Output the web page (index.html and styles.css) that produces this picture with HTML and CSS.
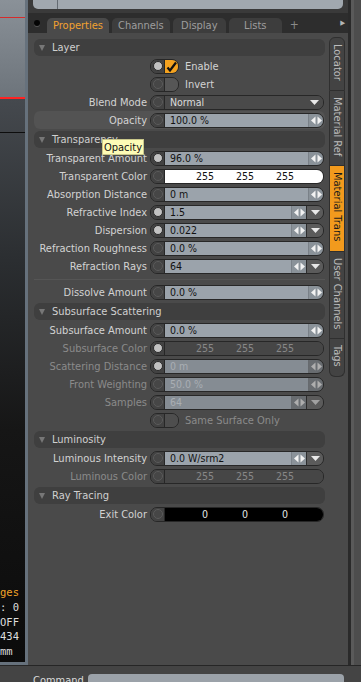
FILE: index.html
```html
<!DOCTYPE html>
<html lang="en">
<head>
    <meta charset="UTF-8">
    <meta name="viewport" content="width=device-width, initial-scale=1.0">
    <title>Properties - Material Trans</title>
    <link rel="stylesheet" href="styles.css">
</head>
<body>
    <svg class="defs" width="0" height="0">
        <symbol id="spin" viewBox="0 0 13 13">
            <path d="M1 6.5 5.5 2.5v8z" fill="#f2f2f2"/>
            <path d="M12 6.5 7.5 2.5v8z" fill="#f2f2f2"/>
        </symbol>
        <symbol id="down" viewBox="0 0 9 5">
            <path d="M0 0h9L4.5 5z" fill="#e8e8e8"/>
        </symbol>
        <symbol id="tick" viewBox="0 0 13 13">
            <path d="M2.5 7.5 5 10.5 11 2.5" fill="none" stroke="#111" stroke-width="2.2"/>
        </symbol>
    </svg>

    <div class="app">
        <div class="main">
            <div class="viewport">
                <div class="hud">
                    <div class="hl">ges</div>
                    <div>: 0</div>
                    <div>OFF</div>
                    <div>434</div>
                    <div>mm</div>
                </div>
            </div>

            <div class="side">
                <div class="topstrip">
                    <div class="ts-box"><div class="ts-cell"></div></div>
                </div>
                <div class="tabbar">
                    <span class="dot"></span>
                    <div class="tab active">Properties</div>
                    <div class="tab">Channels</div>
                    <div class="tab">Display</div>
                    <div class="tab">Lists</div>
                    <span class="tab-add">+</span>
                    <span class="tab-more">&#9654;</span>
                </div>

                <div class="body">
                    <div class="props">
                        <div class="hdr"><span class="tri"></span>Layer</div>
                        <div class="row">
                            <div class="lbl"></div>
                            <div class="ctl check"><span class="key on"><i></i></span><span class="box on"><svg width="13" height="13"><use href="#tick"/></svg></span></div>
                            <span class="ctext">Enable</span>
                        </div>
                        <div class="row">
                            <div class="lbl"></div>
                            <div class="ctl check"><span class="key"><i></i></span><span class="box"></span></div>
                            <span class="ctext">Invert</span>
                        </div>
                        <div class="row">
                            <div class="lbl">Blend Mode</div>
                            <div class="ctl"><span class="key"><i></i></span><span class="val dark">Normal</span><span class="drop flat"><svg width="9" height="5"><use href="#down"/></svg></span></div>
                        </div>
                        <div class="row hl">
                            <div class="lbl">Opacity</div>
                            <div class="ctl"><span class="key"><i></i></span><span class="val">100.0 %</span><span class="spin"><svg width="13" height="13"><use href="#spin"/></svg></span></div>
                        </div>

                        <div class="hdr"><span class="tri"></span>Transparency</div>
                        <div class="row">
                            <div class="lbl">Transparent Amount</div>
                            <div class="ctl"><span class="key on"><i></i></span><span class="val">96.0 %</span><span class="spin"><svg width="13" height="13"><use href="#spin"/></svg></span></div>
                        </div>
                        <div class="row">
                            <div class="lbl">Transparent Color</div>
                            <div class="ctl"><span class="key"><i></i></span><span class="val rgb white"><b>255</b><b>255</b><b>255</b></span></div>
                        </div>
                        <div class="row">
                            <div class="lbl">Absorption Distance</div>
                            <div class="ctl"><span class="key"><i></i></span><span class="val">0 m</span><span class="spin"><svg width="13" height="13"><use href="#spin"/></svg></span></div>
                        </div>
                        <div class="row">
                            <div class="lbl">Refractive Index</div>
                            <div class="ctl"><span class="key on"><i></i></span><span class="val">1.5</span><span class="spin"><svg width="13" height="13"><use href="#spin"/></svg></span><span class="drop"><svg width="9" height="5"><use href="#down"/></svg></span></div>
                        </div>
                        <div class="row">
                            <div class="lbl">Dispersion</div>
                            <div class="ctl"><span class="key on"><i></i></span><span class="val">0.022</span><span class="spin"><svg width="13" height="13"><use href="#spin"/></svg></span><span class="drop"><svg width="9" height="5"><use href="#down"/></svg></span></div>
                        </div>
                        <div class="row">
                            <div class="lbl">Refraction Roughness</div>
                            <div class="ctl"><span class="key"><i></i></span><span class="val">0.0 %</span><span class="spin"><svg width="13" height="13"><use href="#spin"/></svg></span></div>
                        </div>
                        <div class="row">
                            <div class="lbl">Refraction Rays</div>
                            <div class="ctl"><span class="key"><i></i></span><span class="val">64</span><span class="spin"><svg width="13" height="13"><use href="#spin"/></svg></span><span class="drop"><svg width="9" height="5"><use href="#down"/></svg></span></div>
                        </div>
                        <div class="spacer"></div>
                        <div class="row">
                            <div class="lbl">Dissolve Amount</div>
                            <div class="ctl"><span class="key"><i></i></span><span class="val">0.0 %</span><span class="spin"><svg width="13" height="13"><use href="#spin"/></svg></span></div>
                        </div>

                        <div class="hdr"><span class="tri"></span>Subsurface Scattering</div>
                        <div class="row">
                            <div class="lbl">Subsurface Amount</div>
                            <div class="ctl"><span class="key"><i></i></span><span class="val">0.0 %</span><span class="spin"><svg width="13" height="13"><use href="#spin"/></svg></span></div>
                        </div>
                        <div class="row off">
                            <div class="lbl">Subsurface Color</div>
                            <div class="ctl"><span class="key on"><i></i></span><span class="val rgb dark"><b>255</b><b>255</b><b>255</b></span></div>
                        </div>
                        <div class="row off">
                            <div class="lbl">Scattering Distance</div>
                            <div class="ctl"><span class="key on"><i></i></span><span class="val">0 m</span><span class="spin"><svg width="13" height="13"><use href="#spin"/></svg></span></div>
                        </div>
                        <div class="row off">
                            <div class="lbl">Front Weighting</div>
                            <div class="ctl"><span class="key"><i></i></span><span class="val">50.0 %</span><span class="spin"><svg width="13" height="13"><use href="#spin"/></svg></span></div>
                        </div>
                        <div class="row off">
                            <div class="lbl">Samples</div>
                            <div class="ctl"><span class="key"><i></i></span><span class="val">64</span><span class="spin"><svg width="13" height="13"><use href="#spin"/></svg></span><span class="drop"><svg width="9" height="5"><use href="#down"/></svg></span></div>
                        </div>
                        <div class="row off">
                            <div class="lbl"></div>
                            <div class="ctl check"><span class="key"><i></i></span><span class="box"></span></div>
                            <span class="ctext">Same Surface Only</span>
                        </div>

                        <div class="hdr"><span class="tri"></span>Luminosity</div>
                        <div class="row">
                            <div class="lbl">Luminous Intensity</div>
                            <div class="ctl"><span class="key"><i></i></span><span class="val">0.0 W/srm2</span><span class="spin"><svg width="13" height="13"><use href="#spin"/></svg></span><span class="drop"><svg width="9" height="5"><use href="#down"/></svg></span></div>
                        </div>
                        <div class="row off">
                            <div class="lbl">Luminous Color</div>
                            <div class="ctl"><span class="key"><i></i></span><span class="val rgb dark"><b>255</b><b>255</b><b>255</b></span></div>
                        </div>

                        <div class="hdr"><span class="tri"></span>Ray Tracing</div>
                        <div class="row">
                            <div class="lbl">Exit Color</div>
                            <div class="ctl"><span class="key"><i></i></span><span class="val rgb black"><b>0</b><b>0</b><b>0</b></span></div>
                        </div>
                    </div>

                    <div class="vtabs">
                        <div class="vtab">Locator</div>
                        <div class="vtab">Material Ref</div>
                        <div class="vtab on">Material Trans</div>
                        <div class="vtab">User Channels</div>
                        <div class="vtab">Tags</div>
                    </div>
                </div>
            </div>

            <div class="rstrip"></div>
        </div>

        <div class="cmdbar">
            <span class="cmd-label">Command</span>
            <div class="cmd-input"></div>
        </div>

        <div class="tooltip">Opacity</div>
    </div>
</body>
</html>
```

FILE: styles.css
```css
* {
    box-sizing: border-box;
}
body {
    margin: 0;
    width: 361px;
    height: 682px;
    overflow: hidden;
    background-color: #3b3b3b;
    font-family: "DejaVu Sans Condensed", "DejaVu Sans", sans-serif;
    font-size: 11px;
    color: #d3d3d3;
}
.defs {
    position: absolute;
    width: 0;
    height: 0;
}
.app {
    position: relative;
    display: flex;
    flex-direction: column;
    height: 682px;
}
.main {
    display: flex;
    height: 665px;
}

/* viewport on the left */
.viewport {
    flex: none;
    width: 28px;
    height: 665px;
    border-right: 3px solid #66717c;
    border-bottom: 3px solid #66717c;
    overflow: hidden;
    display: flex;
    flex-direction: column;
    justify-content: flex-end;
    padding-bottom: 3px;
    background:
        linear-gradient(#d62b2b, #d62b2b) 0 17px / 100% 1px no-repeat,
        linear-gradient(#ff2323, #ff2323) 0 97px / 100% 2px no-repeat,
        linear-gradient(#0d0d0d, #0d0d0d) 0 132px / 100% 1px no-repeat,
        linear-gradient(to bottom, #8a9198 0, #6d747b 97px, #45494e 99px, #2b2e31 260px, #161616 430px, #0b0b0b 100%);
}
.hud {
    font-family: "DejaVu Sans Mono", monospace;
    font-size: 10.5px;
    line-height: 14.8px;
    color: #dedede;
    white-space: nowrap;
}
.hud .hl {
    color: #f2a428;
}

/* properties side */
.side {
    flex: none;
    width: 320px;
    display: flex;
    flex-direction: column;
    background-color: #3a3a3a;
}
.topstrip {
    height: 13px;
    padding: 0 5px 4px 5px;
}
.ts-box {
    height: 9px;
    background-color: #a1a8af;
    border-radius: 0 0 5px 5px;
}
.ts-cell {
    width: 25px;
    height: 9px;
    border-right: 1px solid #646b72;
}
.tabbar {
    height: 20px;
    display: flex;
    align-items: flex-end;
    padding-left: 6px;
    background-color: #2d2d2d;
}
.dot {
    align-self: center;
    width: 6px;
    height: 6px;
    border-radius: 50%;
    background-color: #050505;
    box-shadow: 0 1px 0 #555;
    margin: 0 7px 0 0;
}
.tab {
    min-width: 53px;
    height: 15px;
    line-height: 15px;
    padding: 0 6px;
    margin-right: 3px;
    text-align: center;
    border-radius: 5px 5px 0 0;
    background-color: #3d3d3d;
    color: #9d9d9d;
}
.tab.active {
    background-color: #4a4a4a;
    color: #f2a230;
}
.tab-add {
    color: #8a8a8a;
    font-size: 12px;
    line-height: 15px;
    margin-left: 5px;
}
.tab-more {
    margin-left: auto;
    margin-right: 3px;
    align-self: center;
    font-size: 7px;
    color: #b5b5b5;
}
.body {
    flex: 1;
    display: flex;
    padding-right: 3px;
    background-color: #4a4a4a;
}
.props {
    flex: 1;
    padding: 4px 4px 0 6px;
}
.hdr {
    height: 17px;
    margin: 2px 0 1px;
    display: flex;
    align-items: center;
    padding-left: 5px;
    border-radius: 6px;
    background-color: #3f3f3f;
    color: #d0d0d0;
}
.tri {
    width: 0;
    height: 0;
    border-left: 3.5px solid transparent;
    border-right: 3.5px solid transparent;
    border-top: 6px solid #777;
    margin-right: 7px;
}
.row {
    height: 18px;
    display: flex;
    align-items: center;
}
.row.hl {
    background-color: #535353;
    border-radius: 6px;
}
.lbl {
    flex: none;
    width: 116px;
    text-align: right;
    padding-right: 3px;
    white-space: nowrap;
}
.row.off .lbl,
.row.off .ctext {
    color: #8b8b8b;
}
.ctl {
    flex: none;
    width: 174px;
    height: 15px;
    display: flex;
    border: 1px solid #272727;
    border-radius: 7px;
    overflow: hidden;
}
.ctl.check {
    width: 29px;
}
.ctext {
    margin-left: 6px;
}
.key {
    flex: none;
    width: 14px;
    display: flex;
    align-items: center;
    justify-content: center;
    background-color: #424242;
    border-right: 1px solid #272727;
}
.key i {
    width: 10px;
    height: 10px;
    border-radius: 50%;
    border: 1px solid #5b5b5b;
    background-color: #464646;
}
.key.on i {
    border-color: #2a2a2a;
    background-color: #c2c2c2;
}
.box {
    flex: 1;
    display: flex;
    align-items: center;
    justify-content: center;
    background-color: #565656;
}
.box.on {
    background-color: #f4a21f;
}
.row.off .box {
    background-color: #4e4e4e;
}
.val {
    flex: 1;
    padding-left: 5px;
    line-height: 13px;
    font-size: 10.5px;
    background-color: #9ba3ab;
    color: #121212;
    white-space: nowrap;
    overflow: hidden;
}
.val.dark {
    background-color: #4a4a4a;
    color: #dcdcdc;
}
.row.off .val {
    background-color: #858c93;
    color: #a9aeb3;
}
.val.rgb {
    display: grid;
    grid-template-columns: 40px 40px 40px;
    padding-left: 20px;
    text-align: center;
}
.val.rgb b {
    font-weight: normal;
}
.val.white {
    background-color: #ffffff;
}
.val.black {
    background-color: #000000;
    color: #e6e6e6;
}
.row.off .val.rgb.dark {
    background-color: #464646;
    color: #878787;
}
.spin {
    flex: none;
    width: 15px;
    display: flex;
    align-items: center;
    justify-content: center;
    background-color: #8a9299;
    border-left: 1px solid #7a8188;
}
.row.off .spin {
    background-color: #7d848b;
    opacity: 0.6;
}
.drop {
    flex: none;
    width: 17px;
    display: flex;
    align-items: center;
    justify-content: center;
    background-color: #5b5b5b;
    border-left: 1px solid #2d2d2d;
}
.drop.flat {
    background-color: #4a4a4a;
    border-left: none;
}
.row.off .drop svg {
    opacity: 0.5;
}
.spacer {
    height: 8px;
    border-bottom: 1px solid #555;
    transform: translateY(-3px);
}

/* vertical tabs */
.vtabs {
    flex: none;
    width: 16px;
    margin-top: 4px;
    display: flex;
    flex-direction: column;
}
.vtab {
    writing-mode: vertical-rl;
    width: 16px;
    padding: 6px 0 9px;
    line-height: 14px;
    background-color: #434343;
    color: #bcbcbc;
    border: 1px solid #2f2f2f;
    border-top: none;
    white-space: nowrap;
}
.vtab:first-child {
    border-top: 1px solid #2f2f2f;
    border-radius: 6px 6px 0 0;
}
.vtab:last-child {
    border-radius: 0 0 6px 6px;
}
.vtab.on {
    background-color: #f29a1d;
    color: #1a1a1a;
}

.rstrip {
    flex: 1;
    border-left: 3px solid #2a2a2a;
    background: linear-gradient(to right, #5a5a5a 0 3px, #4d4d4d 3px);
}

/* command line */
.cmdbar {
    height: 17px;
    display: flex;
    align-items: flex-start;
    padding: 8px 17px 0 33px;
    border-top: 1px solid #262626;
    background-color: #444444;
}
.cmd-label {
    line-height: 13px;
    color: #dadada;
}
.cmd-input {
    flex: 1;
    height: 10px;
    margin-left: 4px;
    border-radius: 4px 4px 0 0;
    background-color: #9ba2a9;
}

.tooltip {
    position: absolute;
    left: 102px;
    top: 139px;
    width: 42px;
    height: 16px;
    line-height: 16px;
    text-align: center;
    background-color: #fdfbb6;
    color: #111;
    border: 1px solid #c9c78a;
}
```
